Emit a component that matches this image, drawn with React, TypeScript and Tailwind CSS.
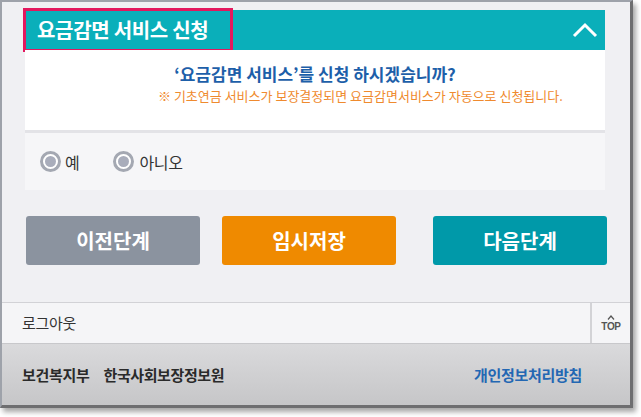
import React from 'react';

const font = { fontFamily: '"Noto Sans CJK KR", "Noto Sans", sans-serif' };

const Radio: React.FC<{ label: string; className?: string }> = ({ label, className }) => (
  <label className={`flex items-center gap-[4px] ${className ?? ''}`}>
    <span className="w-[21px] h-[21px] rounded-full border-[3px] border-[#a4a8b2] bg-white flex items-center justify-center">
      <span className="w-[11px] h-[11px] rounded-full bg-[#a9adbb]" />
    </span>
    <span className="text-[16px] leading-none text-[#333] tracking-[-0.3px]">{label}</span>
  </label>
);

export default function App() {
  return (
    <div className="w-[641px] h-[417px] bg-white overflow-hidden" style={font}>
      <div className="w-[633px] h-[408px] flex flex-col bg-[#f0f0f3] border-t-2 border-l-2 border-r-[3px] border-b-[3px] border-t-[#9ea2aa] border-l-[#9ea2aa] border-r-[#6e6e70] border-b-[#6e6e70] shadow-[3px_4px_5px_rgba(0,0,0,0.35)]">
        {/* Header */}
        <div className="mt-[8px] ml-[23px] mr-[25px] h-[40px] bg-[#0aafba] flex items-center justify-between">
          <div className="-ml-[2px] -my-[2px] w-[210px] h-[44px] border-[3px] border-[#e3185e] pl-[11px] flex items-center">
            <span className="text-[20px] font-bold text-white tracking-[-0.3px]">요금감면 서비스 신청</span>
          </div>
          <svg width="26" height="16" viewBox="0 0 26 16" className="mr-[7px]">
            <polyline points="2,14 13,3 24,14" fill="none" stroke="white" strokeWidth="3" />
          </svg>
        </div>

        {/* Question card */}
        <div className="ml-[23px] mr-[25px] h-[80px] bg-white flex flex-col pt-[12px]">
          <p className="self-center text-[17px] leading-[23px] font-bold text-[#1d5fa9]">
            ‘요금감면 서비스’를 신청 하시겠습니까?
          </p>
          <p className="ml-[133px] mt-[2px] text-[13px] leading-[18px] text-[#ef8a2e] whitespace-nowrap">
            ※ 기초연금 서비스가 보장결정되면 요금감면서비스가 자동으로 신청됩니다.
          </p>
        </div>
        <div className="ml-[23px] mr-[25px] h-[3px] bg-[#e3e3e7]" />

        {/* Radios */}
        <div className="ml-[23px] mr-[25px] h-[57px] bg-[#f6f6f8] flex items-center pl-[15px]">
          <Radio label="예" />
          <Radio label="아니오" className="ml-[34px] gap-[5px]" />
        </div>

        {/* Buttons */}
        <div className="mt-[26px] ml-[24px] flex h-[49px]">
          <button className="w-[174px] rounded-[3px] bg-[#8b939f] text-white text-[20px] font-bold">이전단계</button>
          <button className="ml-[22px] w-[174px] rounded-[3px] bg-[#ef8a00] text-white text-[20px] font-bold">임시저장</button>
          <button className="ml-[37px] w-[174px] rounded-[3px] bg-[#0099a9] text-white text-[20px] font-bold">다음단계</button>
        </div>

        <div className="mt-[37px] h-[1px] bg-[#d2d2d6]" />

        {/* Logout bar */}
        <div className="h-[40px] flex bg-[#f5f5f7]">
          <div className="flex-1 flex items-center pl-[20px] text-[15px] text-[#333] tracking-[-0.3px]">로그아웃</div>
          <div className="w-[40px] border-l-2 border-[#d3d3d6] flex flex-col items-center justify-center leading-none text-[#555]">
            <svg width="8" height="5" viewBox="0 0 8 5">
              <polyline points="1,4.5 4,1 7,4.5" fill="none" stroke="#555" strokeWidth="1.2" />
            </svg>
            <span className="mt-[2px] text-[10px] font-bold tracking-[-0.3px]" style={{ fontFamily: '"Liberation Sans", sans-serif' }}>TOP</span>
          </div>
        </div>

        {/* Footer */}
        <div className="flex-1 flex items-center pl-[20px] pr-[48px] pt-[2px] border-t border-[#c8c8cb] bg-gradient-to-b from-[#dadadc] to-[#c6c6c8]">
          <span className="text-[15px] font-semibold text-[#2a2a2a] tracking-[-0.3px]">보건복지부</span>
          <span className="ml-[14px] text-[15px] font-semibold text-[#2a2a2a] tracking-[-0.4px]">한국사회보장정보원</span>
          <span className="ml-auto text-[15px] font-bold text-[#2367b3] tracking-[-0.3px]">개인정보처리방침</span>
        </div>
      </div>
    </div>
  );
}
